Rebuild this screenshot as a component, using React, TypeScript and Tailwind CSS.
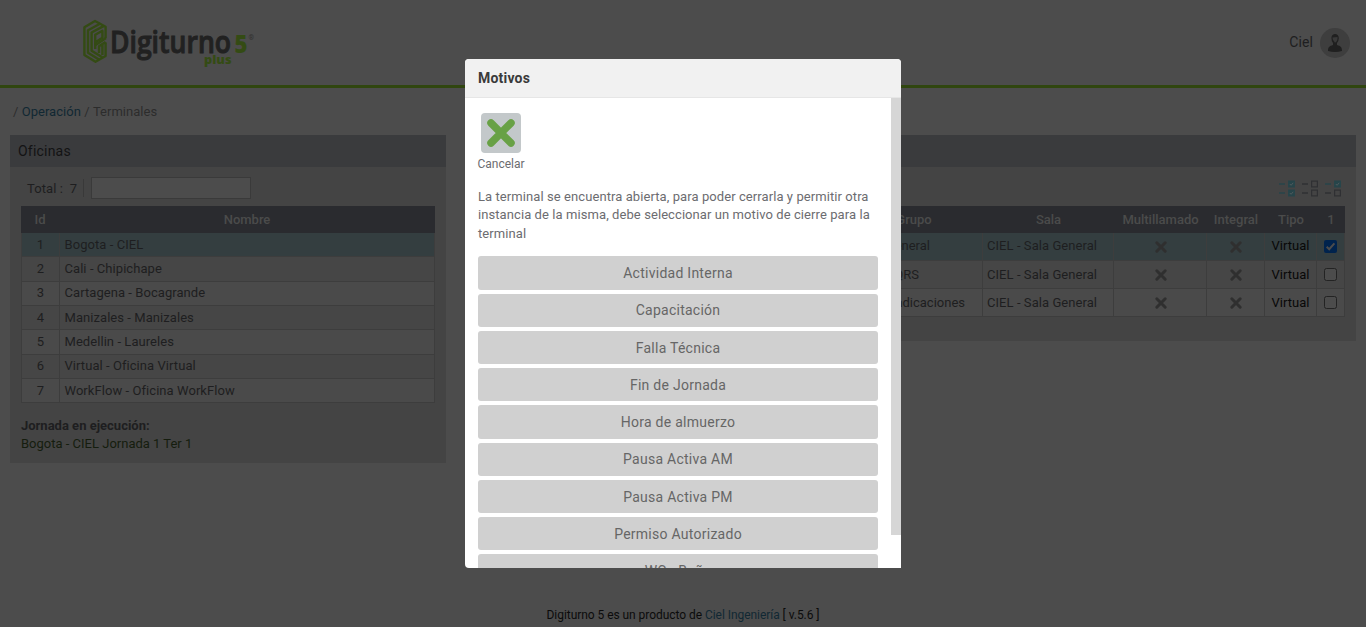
import React from "react";

const offices = [
  "Bogota - CIEL",
  "Cali - Chipichape",
  "Cartagena - Bocagrande",
  "Manizales - Manizales",
  "Medellin - Laureles",
  "Virtual - Oficina Virtual",
  "WorkFlow - Oficina WorkFlow",
];

const terminals = [
  { group: "General", inset: "pr-[52px]", checked: true },
  { group: "PQRS", inset: "pr-[63px]", checked: false },
  { group: "Radicaciones", inset: "pr-[17px]", checked: false },
];

const reasons = [
  "Actividad Interna",
  "Capacitación",
  "Falla Técnica",
  "Fin de Jornada",
  "Hora de almuerzo",
  "Pausa Activa AM",
  "Pausa Activa PM",
  "Permiso Autorizado",
  "WC - Baño",
];

function Logo() {
  return (
    <svg width="176" height="50" viewBox="0 0 176 50" className="block">
      <g fill="none" stroke="#344b14" strokeWidth="2.4" strokeLinejoin="round">
        <path d="M23.6 20V8.8L13 3L2.4 9.2V37L13.5 43.8L23.6 38V24.5" />
        <path d="M18 5.8L6 12.3V34.8L17 41.5" />
        <path d="M21.5 8.1L9.6 14.5V32.7L20.3 39.3" />
        <path d="M13.2 31V16.8L20.4 12.8V19.8L13.5 24.3" />
        <path d="M24 20L13.5 27M23.6 24L17 28.3V35M20.4 26.3V37" />
      </g>
      <text x="28" y="34.5" fill="#212121" stroke="#212121" strokeWidth="1" fontFamily="'Open Sans', sans-serif" fontWeight="600" fontSize="31.5" textLength="121" lengthAdjust="spacingAndGlyphs">Digiturno</text>
      <text x="152.5" y="34.5" fill="#344b14" fontFamily="'Open Sans', sans-serif" fontWeight="800" fontSize="24" textLength="13" lengthAdjust="spacingAndGlyphs">5</text>
      <text x="166.5" y="22" fill="#303030" fontFamily="Roboto, sans-serif" fontSize="7">®</text>
      <text x="122" y="45.5" fill="#344b14" fontFamily="'Open Sans', sans-serif" fontWeight="800" fontSize="13" textLength="27.5" lengthAdjust="spacingAndGlyphs">plus</text>
    </svg>
  );
}

function ListIcon({ top, bottom }: { top: boolean; bottom: boolean }) {
  return (
    <svg width="17" height="17" viewBox="0 0 17 17" fill="none">
      {[top, bottom].map((on, i) => (
        <g key={i} transform={`translate(0 ${i * 9})`}>
          <path d="M1 4H7" stroke={on ? "#27454a" : "#2f3033"} strokeWidth="1.5" />
          <rect x="10.6" y="1.1" width="5.8" height="5.8" stroke={on ? "#27454a" : "#2f3033"} strokeWidth="1.2" fill={on ? "#27454a" : "none"} />
          {on && <path d="M11.8 4L13.1 5.3L15.2 2.8" stroke="#4f5a5c" strokeWidth="1" />}
        </g>
      ))}
    </svg>
  );
}

function Cross() {
  return (
    <svg width="14" height="14" viewBox="0 0 14 14" className="block">
      <path d="M2.8 2.8L11.2 11.2M11.2 2.8L2.8 11.2" stroke="#2f2f2f" strokeWidth="3" strokeLinecap="round" />
    </svg>
  );
}

function Check({ checked }: { checked: boolean }) {
  return (
    <svg width="13" height="13" viewBox="0 0 13 13" className="block">
      {checked ? (
        <>
          <rect width="13" height="13" rx="2" fill="#00234d" />
          <path d="M2.7 6.7L5.2 9.2L10.4 3.3" fill="none" stroke="#4c4c4c" strokeWidth="2" />
        </>
      ) : (
        <rect x="0.5" y="0.5" width="12" height="12" rx="2" fill="#4c4c4c" stroke="#232323" />
      )}
    </svg>
  );
}

export default function App() {
  return (
    <div className="relative flex h-[627px] w-[1366px] flex-col overflow-hidden bg-[#4c4c4c] font-['Roboto',sans-serif] text-[13px] text-[#1e1e20]">
      <header className="flex h-[88px] shrink-0 items-start justify-between border-b-3 border-[#30460f] pr-4 pl-[82px]">
        <div className="pt-[18px]">
          <Logo />
        </div>
        <div className="flex items-center gap-[7px] pt-7 text-sm">
          <span className="pb-[2px] tracking-[0.1px]">Ciel</span>
          <svg width="30" height="30" viewBox="0 0 30 30">
            <circle cx="15" cy="15" r="15" fill="#3e3e3e" />
            <path d="M8 23C8 19 9.5 18 13 17V15Q11.4 13 11.4 10C11.4 4.6 18.8 4.6 18.8 10Q18.8 13 17 15V17C20.5 18 22 19 22 23Q15 25 8 23Z" fill="#202020" />
            <path d="M12.4 9.6Q15.5 9.3 17.5 9Q18 13 15 14.7Q12.6 13 12.4 9.6Z" fill="#393939" />
          </svg>
        </div>
      </header>

      <nav className="flex h-[47px] shrink-0 items-center gap-[3.3px] pl-[13px] tracking-[0.03px] text-[#2c2c2c]">
        <span>/</span>
        <span className="text-[#112833]">Operación</span>
        <span>/</span>
        <span>Terminales</span>
      </nav>

      <main className="flex items-start justify-between pr-[10px] pl-[10px]">
        <section className="h-[328px] w-[436px] bg-[#444444]">
          <h2 className="flex h-8 items-center bg-[#3a3b3d] pl-2 text-sm tracking-[0.2px] text-[#131314]">Oficinas</h2>
          <div className="flex h-[39px] items-center pt-[3px] pl-[17px]">
            <span className="w-[50px] pt-[2px] tracking-[0.1px] whitespace-pre">Total :  7</span>
            <span className="ml-[6px] h-[18px] w-px bg-[#393939]" />
            <div className="ml-[7px] h-[22px] w-40 border border-[#3a3a3a] bg-[#4c4c4c]" />
          </div>
          <div className="mx-[11px]">
            <div className="grid h-[27px] grid-cols-[38px_1fr] items-center bg-[#2a2b2f] text-center font-medium text-[#4b4b4b]">
              <span>Id</span>
              <span>Nombre</span>
            </div>
            {offices.map((name, i) => (
              <div
                key={name}
                className={`grid h-[24.35px] grid-cols-[38px_1fr] border-x border-b border-[#3d3d3d] ${i === 0 ? "bg-[#343e40]" : i % 2 ? "bg-[#464646]" : "bg-[#4a4a4a]"}`}
              >
                <span className="flex items-center justify-center border-r border-[#3d3d3d] pb-[0.5px]">{i + 1}</span>
                <span className="flex items-center pb-[0.5px] pl-[4.5px] tracking-[0.06px]">{name}</span>
              </div>
            ))}
            <div className="pt-[13.5px] leading-[18px]">
              <p className="font-bold">Jornada en ejecución:</p>
              <p className="text-[#151d0e]">Bogota - CIEL Jornada 1 Ter 1</p>
            </div>
          </div>
        </section>

        <section className="h-[206px] w-[888px] bg-[#444444]">
          <h2 className="h-8 bg-[#3a3b3d]" />
          <div className="flex h-[39px] items-center justify-end gap-[6px] pt-[3px] pr-[15px]">
            <ListIcon top bottom />
            <ListIcon top={false} bottom={false} />
            <ListIcon top bottom={false} />
          </div>
          <div className="mx-[11px]">
            <div className="grid h-[27px] grid-cols-[366px_138px_131px_93px_58px_52px_28px] items-center bg-[#2a2b2f] text-center font-medium text-[#4b4b4b]">
              <span />
              <span>Grupo</span>
              <span>Sala</span>
              <span>Multillamado</span>
              <span>Integral</span>
              <span>Tipo</span>
              <span>1</span>
            </div>
            {terminals.map((t, i) => (
              <div
                key={t.group}
                className={`grid h-7 grid-cols-[366px_138px_131px_93px_58px_52px_28px] border-b border-[#3d3d3d] *:flex *:items-center *:border-r *:border-[#3d3d3d] ${i === 0 ? "bg-[#343e40]" : i % 2 ? "bg-[#464646]" : "bg-[#4a4a4a]"}`}
              >
                <span />
                <span className={`justify-end ${t.inset} ${i === 0 ? "pb-[2px]" : ""}`}>{t.group}</span>
                <span className={`pl-1 tracking-[0.06px] ${i === 0 ? "pb-[2px]" : ""}`}>CIEL - Sala General</span>
                <span className="justify-center pl-px">
                  <Cross />
                </span>
                <span className="justify-center pl-px">
                  <Cross />
                </span>
                <span className={`justify-center text-[#080808] ${i === 0 ? "pb-[2px]" : ""}`}>Virtual</span>
                <span className="justify-center">
                  <Check checked={t.checked} />
                </span>
              </div>
            ))}
          </div>
        </section>
      </main>

      <footer className="absolute inset-x-0 bottom-1 text-center text-xs tracking-[-0.05px] text-[#0b0b0b]">
        Digiturno 5 es un producto de <span className="text-[#112833]">Ciel Ingeniería</span> [ v.5.6 ]
      </footer>

      <div role="dialog" className="absolute top-[59px] left-[465px] flex h-[509px] w-[436px] flex-col overflow-hidden rounded-t rounded-bl bg-white">
        <div className="flex h-[39px] shrink-0 items-center border-b border-[#e6e6e6] bg-[#f1f1f1] pl-[13px] text-sm font-bold tracking-[0.2px] text-[#3a3a3a]">Motivos</div>
        <div className="flex min-h-0 flex-1 justify-between">
          <div className="w-[413px] overflow-hidden pt-[15px] pl-[13px] text-[#6c6c70]">
            <div className="flex w-[46px] flex-col items-center">
              <svg width="40" height="40" viewBox="0 0 40 40">
                <rect width="40" height="40" rx="4" fill="#c3c8ca" />
                <path d="M10 10L30 30M30 10L10 30" stroke="#68a145" strokeWidth="7.5" strokeLinecap="round" />
              </svg>
              <span className="mt-[2px] text-xs leading-[18px]">Cancelar</span>
            </div>
            <p className="mt-[14.7px] leading-[18.5px] tracking-[0.08px] whitespace-nowrap">
              La terminal se encuentra abierta, para poder cerrarla y permitir otra<br />
              instancia de la misma, debe seleccionar un motivo de cierre para la<br />
              terminal
            </p>
            <div className="mt-[13.3px] flex flex-col gap-1">
              {reasons.map((r) => (
                <button key={r} className="h-[33.25px] shrink-0 rounded-[3px] bg-[#d0d0d0] text-sm tracking-[0.26px] text-[#666666]">{r}</button>
              ))}
            </div>
          </div>
          <div className="h-[437px] w-[10px] bg-[#d6d6d6]" />
        </div>
      </div>
    </div>
  );
}
